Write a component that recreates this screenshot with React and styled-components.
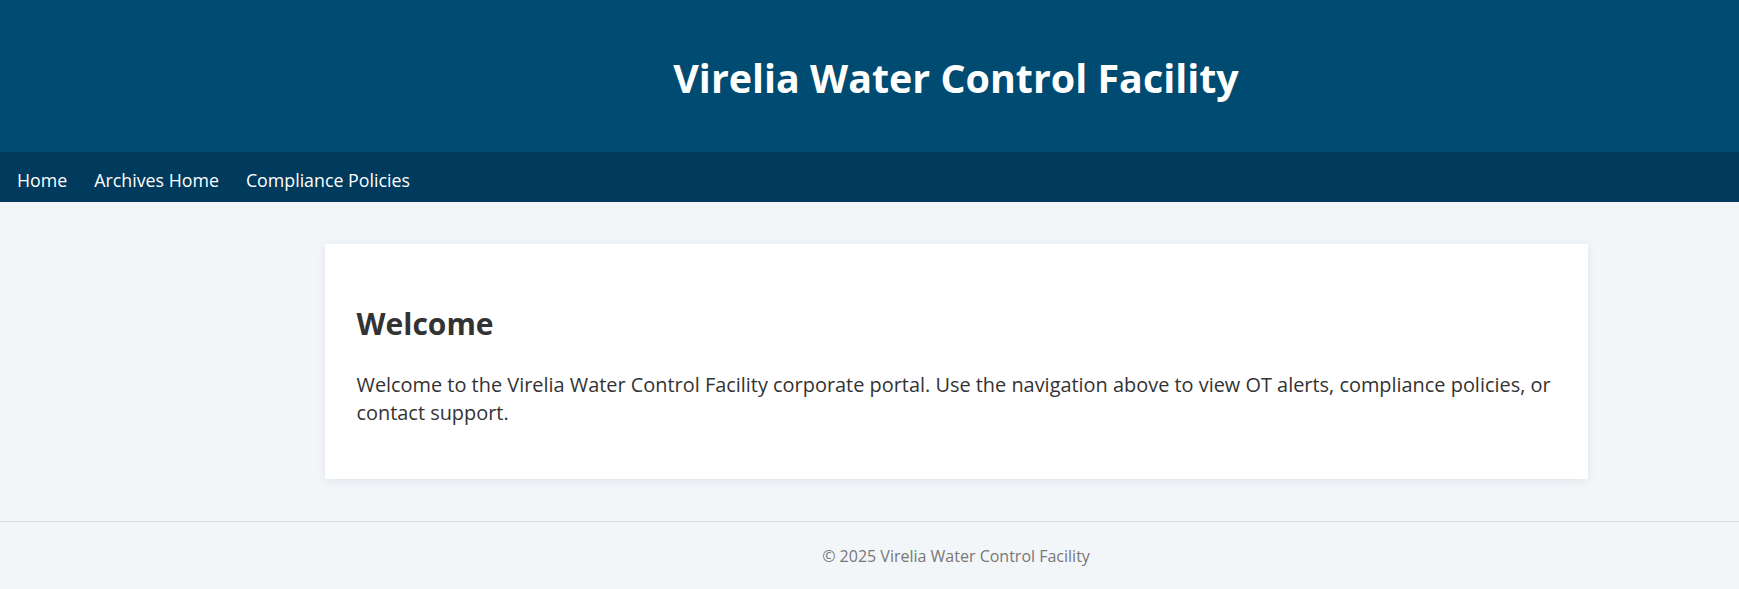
import React from "react";
import styled, { createGlobalStyle, css } from "styled-components";

const GlobalStyle = createGlobalStyle`
  html, body {
    margin: 0;
    padding: 0;
    background: #f3f6f9;
  }
  body {
    font-family: "Open Sans", "Noto Sans", sans-serif;
    color: #333333;
  }
  * { box-sizing: border-box; }
`;

const centreShift = css`
  padding-left: 173px;
`;

const Page = styled.div`
  min-height: 100vh;
  display: flex;
  flex-direction: column;
  background: #f3f6f9;
`;

const Header = styled.header`
  ${centreShift};
  background: #004b71;
  padding-top: 50px;
  padding-bottom: 46px;
  text-align: center;
`;

const Title = styled.h1`
  margin: 0;
  font-size: 39.4px;
  line-height: 56px;
  font-weight: 700;
  color: #ffffff;
`;

const Nav = styled.nav`
  background: #003a5c;
  height: 50px;
  padding: 5px 17px 0;
  display: flex;
  align-items: center;
  gap: 27px;
`;

const NavLink = styled.a`
  color: #ffffff;
  text-decoration: none;
  font-size: 17.8px;
  cursor: pointer;
`;

const Main = styled.main`
  ${centreShift};
  padding-top: 42px;
  padding-bottom: 42px;
  flex: 1;
`;

const Card = styled.section`
  width: 1263px;
  margin: 0 auto;
  background: #ffffff;
  padding: 32px;
  border-radius: 2px;
  box-shadow: 0 2px 10px rgba(20, 40, 70, 0.09);
`;

const Heading = styled.h2`
  margin: 28px 0 27px;
  font-size: 30px;
  line-height: 40px;
  font-weight: 700;
  color: #333333;
`;

const Text = styled.p`
  margin: 0 0 20px;
  font-size: 19.92px;
  line-height: 28px;
  color: #333333;
`;

const Footer = styled.footer`
  ${centreShift};
  border-top: 1px solid #dcdfe3;
  padding-top: 22px;
  padding-bottom: 22px;
  text-align: center;
  font-size: 16px;
  line-height: 24px;
  color: #777777;
`;

const links = ["Home", "Archives Home", "Compliance Policies"];

export default function App() {
  return (
    <>
      <GlobalStyle />
      <Page>
        <Header>
          <Title>Virelia Water Control Facility</Title>
        </Header>
        <Nav>
          {links.map((l) => (
            <NavLink key={l}>{l}</NavLink>
          ))}
        </Nav>
        <Main>
          <Card>
            <Heading>Welcome</Heading>
            <Text>
              Welcome to the Virelia Water Control Facility corporate portal. Use the navigation above to view OT
              alerts, compliance policies, or contact support.
            </Text>
          </Card>
        </Main>
        <Footer>© 2025 Virelia Water Control Facility</Footer>
      </Page>
    </>
  );
}
